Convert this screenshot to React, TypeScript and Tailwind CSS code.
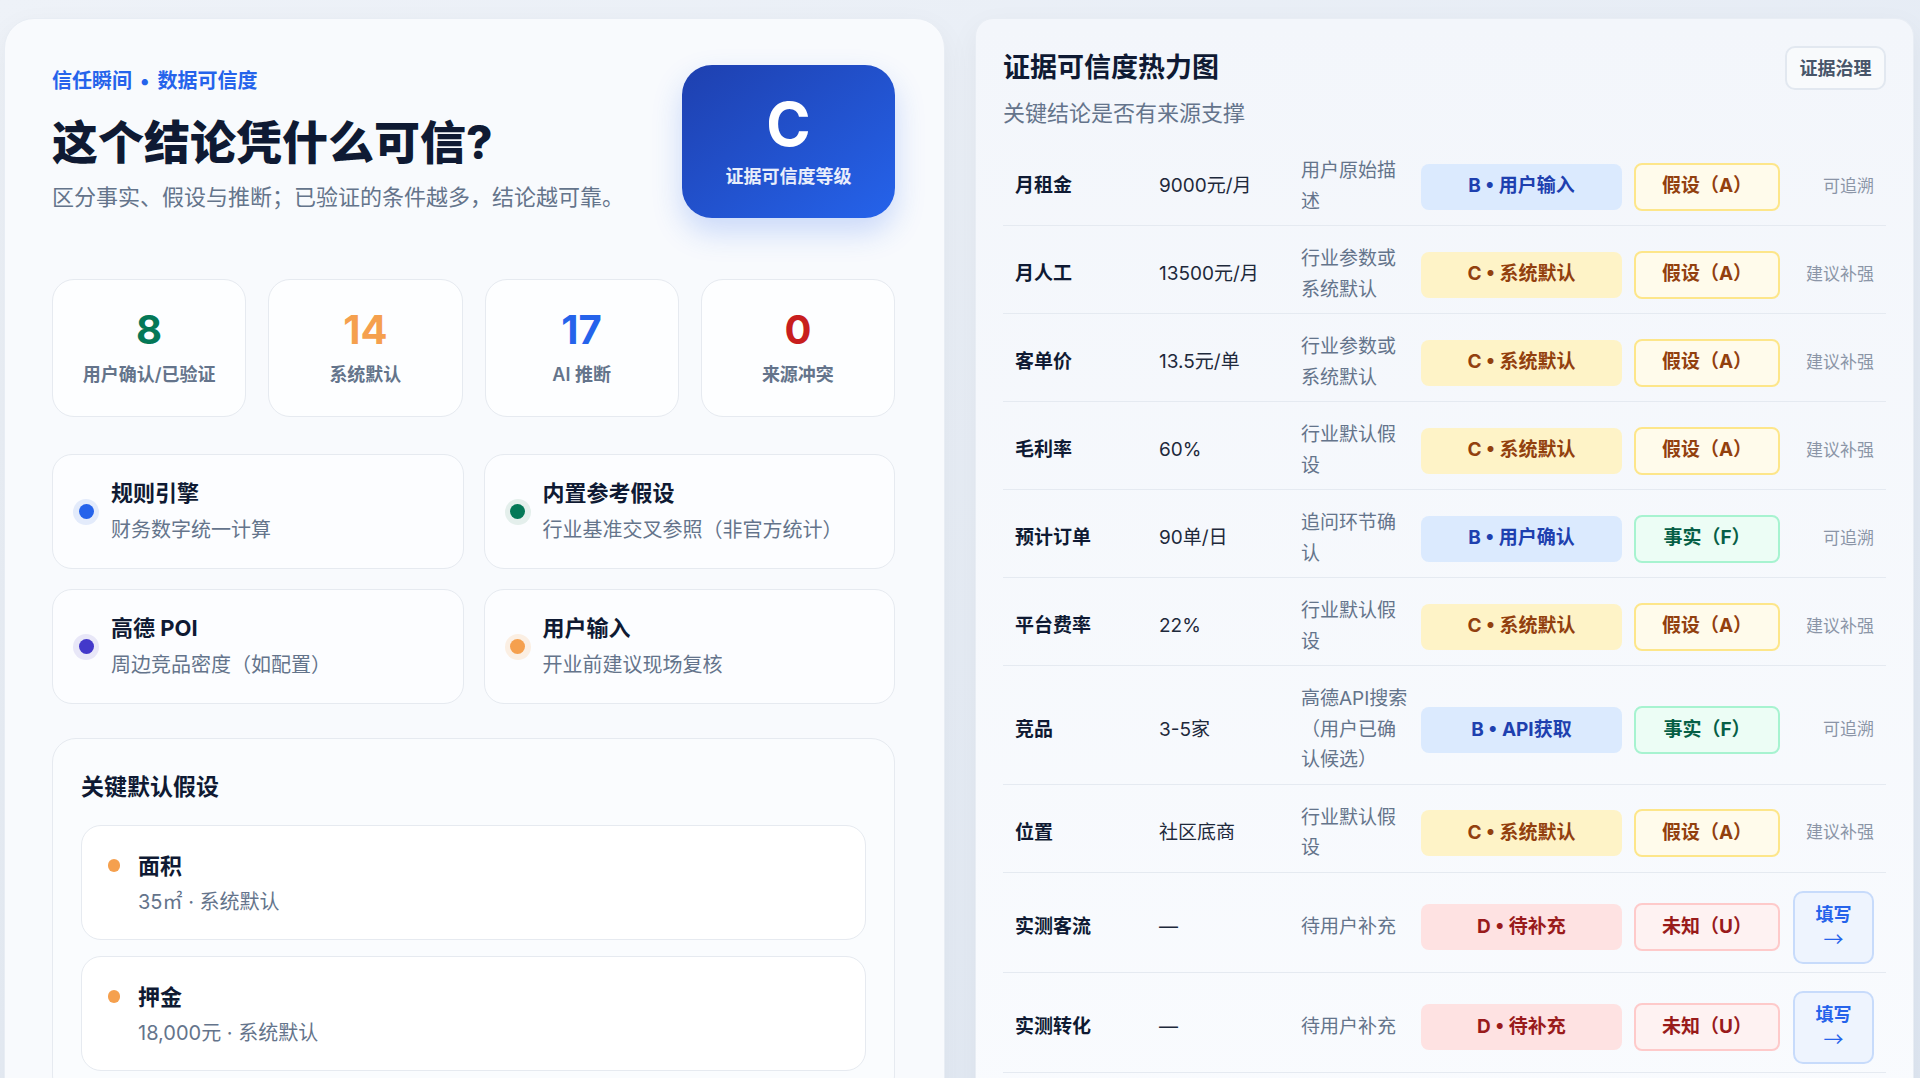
import React from "react";

type Grade = "B" | "C" | "D";
type Kind = "A" | "F" | "U";

const rows: {
  name: string;
  value: string;
  source: string;
  grade: Grade;
  gradeText: string;
  kind: Kind;
  action: string | null;
}[] = [
  { name: "月租金", value: "9000元/月", source: "用户原始描述", grade: "B", gradeText: "用户输入", kind: "A", action: "可追溯" },
  { name: "月人工", value: "13500元/月", source: "行业参数或系统默认", grade: "C", gradeText: "系统默认", kind: "A", action: "建议补强" },
  { name: "客单价", value: "13.5元/单", source: "行业参数或系统默认", grade: "C", gradeText: "系统默认", kind: "A", action: "建议补强" },
  { name: "毛利率", value: "60%", source: "行业默认假设", grade: "C", gradeText: "系统默认", kind: "A", action: "建议补强" },
  { name: "预计订单", value: "90单/日", source: "追问环节确认", grade: "B", gradeText: "用户确认", kind: "F", action: "可追溯" },
  { name: "平台费率", value: "22%", source: "行业默认假设", grade: "C", gradeText: "系统默认", kind: "A", action: "建议补强" },
  { name: "竞品", value: "3-5家", source: "高德API搜索（用户已确认候选）", grade: "B", gradeText: "API获取", kind: "F", action: "可追溯" },
  { name: "位置", value: "社区底商", source: "行业默认假设", grade: "C", gradeText: "系统默认", kind: "A", action: "建议补强" },
  { name: "实测客流", value: "—", source: "待用户补充", grade: "D", gradeText: "待补充", kind: "U", action: null },
  { name: "实测转化", value: "—", source: "待用户补充", grade: "D", gradeText: "待补充", kind: "U", action: null },
];

const gradeStyle: Record<Grade, string> = {
  B: "bg-[#dbeafe] text-[#1e40af]",
  C: "bg-[#fef3c7] text-[#92400e]",
  D: "bg-[#fee2e2] text-[#991b1b]",
};

const kindStyle: Record<Kind, { cls: string; label: string }> = {
  A: { cls: "bg-[#fffbeb] border-[#fde68a] text-[#92400e]", label: "假设（A）" },
  F: { cls: "bg-[#ecfdf5] border-[#a7f3d0] text-[#065f46]", label: "事实（F）" },
  U: { cls: "bg-[#fef2f2] border-[#fecaca] text-[#991b1b]", label: "未知（U）" },
};

const stats = [
  { num: "8", label: "用户确认/已验证", color: "text-[#047857]" },
  { num: "14", label: "系统默认", color: "text-[#f5a04e]" },
  { num: "17", label: "AI 推断", color: "text-[#2563eb]" },
  { num: "0", label: "来源冲突", color: "text-[#c81e1e]" },
];

const sources = [
  { title: "规则引擎", desc: "财务数字统一计算", dot: "bg-[#2563eb]", halo: "bg-[#e3ebfb]" },
  { title: "内置参考假设", desc: "行业基准交叉参照（非官方统计）", dot: "bg-[#047857]", halo: "bg-[#e4efec]" },
  { title: "高德 POI", desc: "周边竞品密度（如配置）", dot: "bg-[#4338ca]", halo: "bg-[#e8e7f8]" },
  { title: "用户输入", desc: "开业前建议现场复核", dot: "bg-[#f5a04e]", halo: "bg-[#fbefe3]" },
];

const assumptions = [
  { title: "面积", desc: "35㎡ · 系统默认" },
  { title: "押金", desc: "18,000元 · 系统默认" },
];

export default function App() {
  return (
    <div className="min-h-screen bg-gradient-to-br from-[#eef2f8] to-[#dfe7f2] font-['Inter','Noto_Sans_CJK_SC',sans-serif] text-[#0f172a]">
      <div className="flex gap-[30px] pl-[4px] pr-[6px] pt-[18px]">
        {/* left column */}
        <section className="w-[941px] shrink-0 rounded-[30px] border border-[#e8edf4] bg-[#f8fafd] pl-[47px] pr-[49px] pt-[46px] pb-[40px] shadow-[0_10px_30px_rgba(15,23,42,0.05)]">
          <div className="flex items-start justify-between">
            <div className="pt-[2px]">
              <div className="text-[20px] leading-[28px] font-bold text-[#2563eb]">
                信任瞬间<span className="mx-[8px]">•</span>数据可信度
              </div>
              <h1 className="mt-[19px] text-[46px] leading-[56px] font-extrabold text-[#0f1a33]">这个结论凭什么可信?</h1>
              <p className="mt-[11px] text-[22px] leading-[32px] text-[#64748b]">区分事实、假设与推断；已验证的条件越多，结论越可靠。</p>
            </div>
            <div className="flex h-[153px] w-[213px] flex-col items-center rounded-[30px] bg-gradient-to-br from-[#1e40af] to-[#2563eb] pt-[27px] shadow-[0_14px_30px_rgba(37,99,235,0.22)]">
              <div className="text-[60px] leading-[64px] font-bold text-white">C</div>
              <div className="mt-[9px] text-[18px] leading-[24px] font-bold text-white/90">证据可信度等级</div>
            </div>
          </div>

          <div className="mt-[61px] grid grid-cols-4 gap-[22px]">
            {stats.map((s) => (
              <div key={s.label} className="flex h-[138px] flex-col items-center rounded-[22px] border border-[#e6eaf0] bg-[#fdfeff] pt-[26px]">
                <div className={`text-[40px] leading-[48px] font-bold ${s.color}`}>{s.num}</div>
                <div className="mt-[8px] text-[18px] leading-[26px] font-semibold text-[#64748b]">{s.label}</div>
              </div>
            ))}
          </div>

          <div className="mt-[37px] grid grid-cols-2 gap-[20px]">
            {sources.map((s) => (
              <div key={s.title} className="flex h-[115px] items-center gap-[12px] rounded-[20px] border border-[#e6eaf0] bg-[#fcfdff] pl-[20px]">
                <div className={`flex h-[26px] w-[26px] items-center justify-center rounded-full ${s.halo}`}>
                  <div className={`h-[15px] w-[15px] rounded-full ${s.dot}`} />
                </div>
                <div>
                  <div className="text-[22px] leading-[30px] font-bold text-[#0f1a33]">{s.title}</div>
                  <div className="mt-[7px] text-[20px] leading-[30px] text-[#64748b]">{s.desc}</div>
                </div>
              </div>
            ))}
          </div>

          <div className="mt-[34px] rounded-[24px] border border-[#e6eaf0] bg-[#fafcfe] px-[28px] pt-[32px] pb-[28px]">
            <h2 className="text-[23px] leading-[32px] font-bold text-[#0f1a33]">关键默认假设</h2>
            <div className="mt-[22px] flex flex-col gap-[16px]">
              {assumptions.map((a) => (
                <div key={a.title} className="flex h-[115px] items-start gap-[18px] rounded-[20px] border border-[#e6eaf0] bg-white pl-[26px] pt-[25px]">
                  <div className="mt-[8px] h-[13px] w-[12px] rounded-full bg-[#f5a04e]" />
                  <div>
                    <div className="text-[22px] leading-[30px] font-bold text-[#0f1a33]">{a.title}</div>
                    <div className="mt-[6px] text-[20px] leading-[30px] text-[#64748b]">{a.desc}</div>
                  </div>
                </div>
              ))}
            </div>
          </div>
        </section>

        {/* right column */}
        <section className="min-w-0 flex-1 rounded-[18px] border border-[#e8edf4] bg-gradient-to-b from-[#f3f6fb] to-[#f9fbfe] px-[27px] pt-[29px] pb-[40px] shadow-[0_10px_30px_rgba(15,23,42,0.05)]">
          <div className="flex items-start justify-between">
            <div>
              <h2 className="text-[27px] leading-[40px] font-bold text-[#0f1a33]">证据可信度热力图</h2>
              <p className="mt-[10px] text-[22px] leading-[30px] text-[#64748b]">关键结论是否有来源支撑</p>
            </div>
            <button className="-mt-[2px] h-[44px] w-[101px] rounded-[10px] border-2 border-[#e2e8f0] bg-[#f8fafc] text-[18px] font-bold text-[#475569]">
              证据治理
            </button>
          </div>

          <div className="mt-[10px]">
            {rows.map((r) => (
              <div
                key={r.name}
                className="grid grid-cols-[132px_130px_108px_201px_146px_1fr] items-center gap-x-[12px] border-b border-[#e5eaf1] px-[12px] pt-[18px] pb-[8px]"
              >
                <div className="text-[19px] font-bold text-[#0f1a33]">{r.name}</div>
                <div className="text-[19px] text-[#1e293b]">{r.value}</div>
                <div className="text-[19px] leading-[30.5px] text-[#64748b]">{r.source}</div>
                <div className={`flex h-[46px] items-center justify-center rounded-[8px] text-[19px] font-bold ${gradeStyle[r.grade]}`}>
                  {r.grade} • {r.gradeText}
                </div>
                <div className={`flex h-[48px] items-center justify-center rounded-[8px] border-2 text-[19px] font-bold ${kindStyle[r.kind].cls}`}>
                  {kindStyle[r.kind].label}
                </div>
                <div className="flex justify-end">
                  {r.action ? (
                    <span className="text-[17px] text-[#8b95a7]">{r.action}</span>
                  ) : (
                    <button className="flex h-[73px] w-[81px] flex-col items-center justify-center rounded-[10px] border-2 border-[#c7dbfb] bg-[#eef4fe] text-[#2563eb]">
                      <span className="text-[18px] leading-[24px] font-bold">填写</span>
                      <span className="font-['Noto_Sans_CJK_SC',sans-serif] text-[20px] leading-[24px]">→</span>
                    </button>
                  )}
                </div>
              </div>
            ))}
          </div>
        </section>
      </div>
    </div>
  );
}
